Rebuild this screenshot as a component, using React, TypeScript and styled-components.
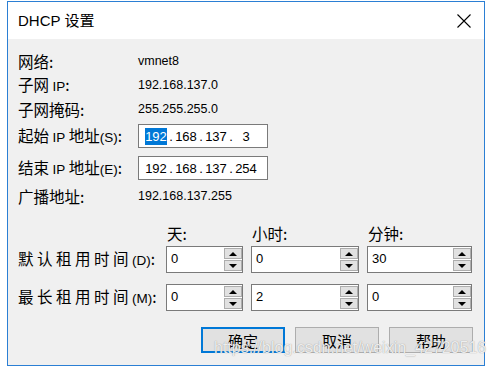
import React from "react";
import styled, { createGlobalStyle } from "styled-components";

const GlobalStyle = createGlobalStyle`
  body {
    margin: 0;
    background: #ffffff;
    font-family: "Liberation Sans", "Noto Sans CJK SC", sans-serif;
    color: #000;
  }
`;

const DialogWindow = styled.div`
  position: relative;
  margin: 1px 0 0 7px;
  width: 478px;
  height: 365px;
  box-sizing: border-box;
  border: 1px solid #2b7fd4;
  background: #f0f0f0;
  display: flex;
  flex-direction: column;
`;

const TitleBar = styled.div`
  height: 37px;
  flex: 0 0 auto;
  background: #ffffff;
  display: flex;
  align-items: center;
  justify-content: space-between;
  padding: 0 13px 0 10px;
`;

const TitleText = styled.span`
  font-size: 15px;
  line-height: 18px;
`;

const DialogBody = styled.div`
  padding: 10px 11px 0 10px;
  display: flex;
  flex-direction: column;
`;

const InfoRow = styled.div<{ top?: number }>`
  display: grid;
  grid-template-columns: 120px 1fr;
  align-items: center;
  height: 24px;
  margin-top: ${({ top }) => top ?? 0}px;
`;

const Label = styled.span`
  font-family: "Noto Sans CJK SC", sans-serif;
  font-size: 15.5px;
  line-height: 18px;
  white-space: nowrap;
`;

const Latin = styled.span`
  font-family: "Liberation Sans", sans-serif;
  font-size: 13.5px;
  letter-spacing: 0;
`;

const Value = styled.span`
  font-size: 12.5px;
  line-height: 16px;
`;

const IpBox = styled.div`
  width: 130px;
  height: 24px;
  box-sizing: border-box;
  border: 1px solid #7a7a7a;
  background: #ffffff;
  display: flex;
  align-items: center;
  padding-left: 6px;
  font-size: 13px;
`;

const IpField = styled.span<{ selected?: boolean }>`
  width: 22px;
  text-align: center;
  line-height: 17px;
  background: ${({ selected }) => (selected ? "#0078d7" : "transparent")};
  color: ${({ selected }) => (selected ? "#ffffff" : "#000")};
`;

const IpDot = styled.span`
  width: 8px;
  text-align: center;
`;

const LeaseGrid = styled.div`
  display: grid;
  grid-template-columns: 140px 77px 108px 105px;
  column-gap: 8px;
  margin-top: 15px;
  align-items: center;
`;

const ColumnHead = styled.span`
  font-family: "Noto Sans CJK SC", sans-serif;
  font-size: 15.5px;
  line-height: 20px;
  padding-left: 1px;
`;

const LeaseLabel = styled(Label)<{ top: number }>`
  margin-top: ${({ top }) => top}px;
  letter-spacing: 3.5px;
`;

const SpinBox = styled.div<{ top: number }>`
  height: 27px;
  margin-top: ${({ top }) => top}px;
  box-sizing: border-box;
  border: 1px solid #7a7a7a;
  background: #ffffff;
  display: flex;
`;

const SpinText = styled.span`
  flex: 1;
  padding: 4px 0 0 4px;
  font-size: 13px;
  line-height: 15px;
`;

const SpinButtons = styled.div`
  width: 18px;
  display: flex;
  flex-direction: column;
  gap: 1px;
  padding: 1px 0 1px 1px;
`;

const SpinButton = styled.div<{ down?: boolean }>`
  flex: 1;
  background: #e1e1e1;
  border: 1px solid #adadad;
  display: flex;
  align-items: center;
  justify-content: center;
  &::after {
    content: "";
    border-left: 4px solid transparent;
    border-right: 4px solid transparent;
    ${({ down }) =>
      down ? "border-top: 4px solid #000;" : "border-bottom: 4px solid #000;"}
  }
`;

const ButtonRow = styled.div`
  display: flex;
  justify-content: flex-end;
  gap: 10px;
  margin-top: 16px;
`;

const DialogButton = styled.div<{ primary?: boolean }>`
  width: 84px;
  height: 26px;
  box-sizing: border-box;
  background: #e1e1e1;
  border: ${({ primary }) => (primary ? "2px solid #0078d7" : "1px solid #adadad")};
  display: flex;
  align-items: center;
  justify-content: center;
  font-family: "Noto Sans CJK SC", sans-serif;
  font-size: 15px;
`;

const Watermark = styled.div`
  position: absolute;
  left: 206px;
  top: 337px;
  font-size: 16px;
  white-space: nowrap;
  color: rgba(255, 255, 255, 0.85);
  text-shadow: 0 0 1px rgba(110, 110, 110, 0.8);
  pointer-events: none;
`;

const CloseIcon = () => (
  <svg width="14" height="14" viewBox="0 0 14 14">
    <path d="M0.5 0.5 L13.5 13.5 M13.5 0.5 L0.5 13.5" stroke="#000" strokeWidth="1.1" />
  </svg>
);

const Spin: React.FC<{ value: string; top: number }> = ({ value, top }) => (
  <SpinBox top={top}>
    <SpinText>{value}</SpinText>
    <SpinButtons>
      <SpinButton />
      <SpinButton down />
    </SpinButtons>
  </SpinBox>
);

const IpAddress: React.FC<{ parts: string[]; selectFirst?: boolean }> = ({ parts, selectFirst }) => (
  <IpBox>
    {parts.map((p, i) => (
      <React.Fragment key={i}>
        {i > 0 && <IpDot>.</IpDot>}
        <IpField selected={selectFirst && i === 0}>{p}</IpField>
      </React.Fragment>
    ))}
  </IpBox>
);

export default function App() {
  return (
    <>
      <GlobalStyle />
      <DialogWindow>
        <TitleBar>
          <TitleText>DHCP 设置</TitleText>
          <CloseIcon />
        </TitleBar>
        <DialogBody>
          <InfoRow>
            <Label>网络:</Label>
            <Value>vmnet8</Value>
          </InfoRow>
          <InfoRow>
            <Label>子网 <Latin>IP</Latin>:</Label>
            <Value>192.168.137.0</Value>
          </InfoRow>
          <InfoRow>
            <Label>子网掩码:</Label>
            <Value>255.255.255.0</Value>
          </InfoRow>
          <InfoRow top={3}>
            <Label>起始 <Latin>IP</Latin> 地址<Latin>(S)</Latin>:</Label>
            <IpAddress parts={["192", "168", "137", "3"]} selectFirst />
          </InfoRow>
          <InfoRow top={8}>
            <Label>结束 <Latin>IP</Latin> 地址<Latin>(E)</Latin>:</Label>
            <IpAddress parts={["192", "168", "137", "254"]} />
          </InfoRow>
          <InfoRow top={4}>
            <Label>广播地址:</Label>
            <Value>192.168.137.255</Value>
          </InfoRow>
          <LeaseGrid>
            <span />
            <ColumnHead>天:</ColumnHead>
            <ColumnHead>小时:</ColumnHead>
            <ColumnHead>分钟:</ColumnHead>
            <LeaseLabel top={3}>默认租用时间<Latin>(D)</Latin>:</LeaseLabel>
            <Spin value="0" top={3} />
            <Spin value="0" top={3} />
            <Spin value="30" top={3} />
            <LeaseLabel top={11}>最长租用时间<Latin>(M)</Latin>:</LeaseLabel>
            <Spin value="0" top={11} />
            <Spin value="2" top={11} />
            <Spin value="0" top={11} />
          </LeaseGrid>
          <ButtonRow>
            <DialogButton primary>确定</DialogButton>
            <DialogButton>取消</DialogButton>
            <DialogButton>帮助</DialogButton>
          </ButtonRow>
        </DialogBody>
        <Watermark>https://blog.csdn.net/weixin_42720516</Watermark>
      </DialogWindow>
    </>
  );
}
